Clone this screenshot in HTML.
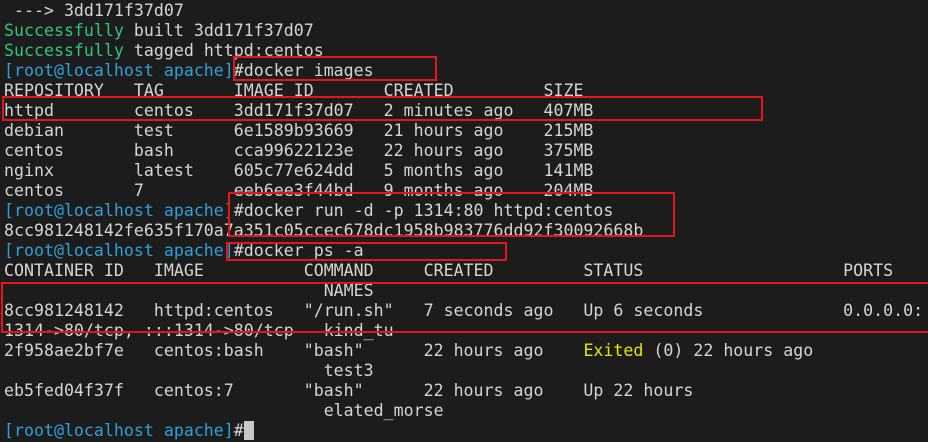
<!DOCTYPE html>
<html><head><meta charset="utf-8"><style>
html,body{margin:0;padding:0;background:#1c1c1c;width:928px;height:442px;overflow:hidden;position:relative}
pre{margin:0;position:absolute;left:4px;top:1px;font-family:"DejaVu Sans Mono","Liberation Mono",monospace;font-size:16.6px;line-height:20px;color:#d4d4d4;white-space:pre}
.g{color:#2fc57f}.b{color:#2f9fd8}.y{color:#e6e600}
.cur{background:#c8c8c8;display:inline-block;width:10px;height:19px;vertical-align:-4px}
.box{position:absolute;border:2px solid #e8141c;box-sizing:border-box}
</style></head><body>
<pre> ---&gt; 3dd171f37d07
<span class="g">Successfully</span> built 3dd171f37d07
<span class="g">Successfully</span> tagged httpd:centos
<span class="b">[root@localhost apache]</span>#docker images
REPOSITORY   TAG       IMAGE ID       CREATED         SIZE
httpd        centos    3dd171f37d07   2 minutes ago   407MB
debian       test      6e1589b93669   21 hours ago    215MB
centos       bash      cca99622123e   22 hours ago    375MB
nginx        latest    605c77e624dd   5 months ago    141MB
centos       7         eeb6ee3f44bd   9 months ago    204MB
<span class="b">[root@localhost apache]</span>#docker run -d -p 1314:80 httpd:centos
8cc981248142fe635f170a7a351c05ccec678dc1958b983776dd92f30092668b
<span class="b">[root@localhost apache]</span>#docker ps -a
CONTAINER ID   IMAGE          COMMAND     CREATED         STATUS                    PORTS
                                NAMES
8cc981248142   httpd:centos   "/run.sh"   7 seconds ago   Up 6 seconds              0.0.0.0:
1314-&gt;80/tcp, :::1314-&gt;80/tcp   kind_tu
2f958ae2bf7e   centos:bash    "bash"      22 hours ago    <span class="y">Exited</span> (0) 22 hours ago
                                test3
eb5fed04f37f   centos:7       "bash"      22 hours ago    Up 22 hours
                                elated_morse
<span class="b">[root@localhost apache]</span>#<span class="cur"></span></pre>
<div class="box" style="left:233px;top:56px;width:204px;height:25px"></div>
<div class="box" style="left:2px;top:96px;width:761px;height:25px"></div>
<div class="box" style="left:228px;top:192px;width:447px;height:45px"></div>
<div class="box" style="left:226px;top:242px;width:281px;height:19px"></div>
<div class="box" style="left:1px;top:282px;width:930px;height:51px"></div>
</body></html>
